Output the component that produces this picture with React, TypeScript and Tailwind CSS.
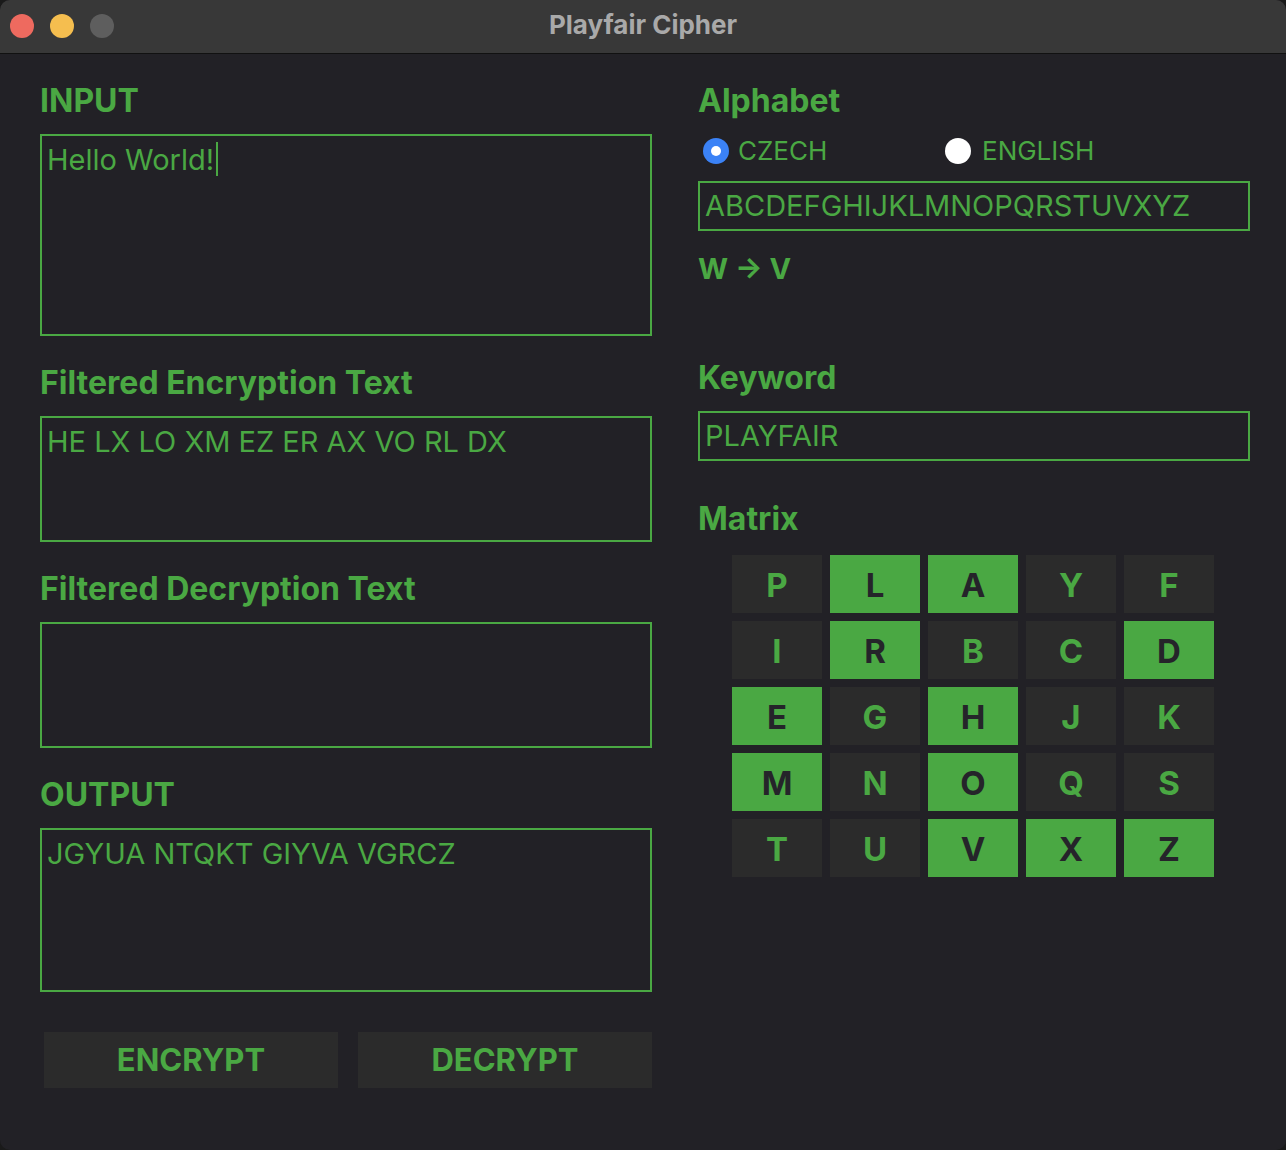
import React from "react";

const Label = ({ children }: { children: React.ReactNode }) => (
  <div className="text-[32px] leading-[36px] font-bold text-[#4aa843]">{children}</div>
);

const Box = ({ h, children, caret }: { h: string; children?: React.ReactNode; caret?: boolean }) => (
  <div className={`border-2 border-[#4aa843] ${h} px-[5px] pt-[6px] text-[29px] leading-[36px] text-[#4aa843]`}>
    {children}
    {caret && <span className="inline-block w-[2px] h-[34px] bg-[#4aa843] align-top ml-[2px]" />}
  </div>
);

const matrix = [
  ["P", "L", "A", "Y", "F"],
  ["I", "R", "B", "C", "D"],
  ["E", "G", "H", "J", "K"],
  ["M", "N", "O", "Q", "S"],
  ["T", "U", "V", "X", "Z"],
];
const greens = new Set(["L", "A", "R", "D", "E", "H", "M", "O", "V", "X", "Z"]);

export default function App() {
  return (
    <div className="w-[1286px] h-[1150px] bg-[#1a1a1a]" style={{ fontFamily: "Inter, 'Noto Sans', sans-serif" }}>
      <div className="w-full h-full rounded-[10px] overflow-hidden bg-[#222126] flex flex-col">
        <div className="h-[54px] bg-[#383838] border-b border-[#111] flex items-center relative shrink-0">
          <div className="flex gap-[16px] pl-[10px] -mt-[2px]">
            <div className="w-[24px] h-[24px] rounded-full bg-[#ee6a5f]" />
            <div className="w-[24px] h-[24px] rounded-full bg-[#f5be4f]" />
            <div className="w-[24px] h-[24px] rounded-full bg-[#5e5e5e]" />
          </div>
          <div className="absolute inset-0 flex items-center justify-center pb-[4px] text-[26px] font-bold text-[#a9a9a9] pointer-events-none">
            Playfair Cipher
          </div>
        </div>
        <div className="flex pl-[40px] pt-[29px] gap-[46px]">
          <div className="w-[612px] flex flex-col">
            <Label>INPUT</Label>
            <div className="mt-[15px]">
              <Box h="h-[202px]" caret>Hello World!</Box>
            </div>
            <div className="mt-[29px]"><Label>Filtered Encryption Text</Label></div>
            <div className="mt-[15px]">
              <Box h="h-[126px]">HE LX LO XM EZ ER AX VO RL DX</Box>
            </div>
            <div className="mt-[29px]"><Label>Filtered Decryption Text</Label></div>
            <div className="mt-[15px]">
              <Box h="h-[126px]" />
            </div>
            <div className="mt-[29px]"><Label>OUTPUT</Label></div>
            <div className="mt-[15px]">
              <Box h="h-[164px]">JGYUA NTQKT GIYVA VGRCZ</Box>
            </div>
            <div className="mt-[40px] flex gap-[20px] pl-[4px]">
              <button className="w-[294px] h-[56px] bg-[#2b2b2b] text-[31px] font-bold text-[#4aa843]">ENCRYPT</button>
              <button className="w-[294px] h-[56px] bg-[#2b2b2b] text-[31px] font-bold text-[#4aa843]">DECRYPT</button>
            </div>
          </div>
          <div className="w-[552px] flex flex-col">
            <Label>Alphabet</Label>
            <div className="mt-[18px] flex items-center h-[28px] pl-[5px]">
              <div className="flex items-center gap-[9px] w-[242px]">
                <div className="w-[26px] h-[26px] rounded-full bg-[#3b82f6] flex items-center justify-center">
                  <div className="w-[10px] h-[10px] rounded-full bg-white" />
                </div>
                <span className="text-[26px] text-[#4aa843] leading-none">CZECH</span>
              </div>
              <div className="flex items-center gap-[11px]">
                <div className="w-[26px] h-[26px] rounded-full bg-white" />
                <span className="text-[26px] text-[#4aa843] leading-none">ENGLISH</span>
              </div>
            </div>
            <div className="mt-[16px] border-2 border-[#4aa843] h-[50px] px-[5px] flex items-center text-[29px] text-[#4aa843]">
              ABCDEFGHIJKLMNOPQRSTUVXYZ
            </div>
            <div className="mt-[20px] text-[29px] leading-[36px] font-bold text-[#4aa843]">W → V</div>
            <div className="mt-[73px]"><Label>Keyword</Label></div>
            <div className="mt-[15px] border-2 border-[#4aa843] h-[50px] px-[5px] flex items-center text-[29px] text-[#4aa843]">
              PLAYFAIR
            </div>
            <div className="mt-[40px]"><Label>Matrix</Label></div>
            <div className="mt-[18px] ml-[34px] grid grid-cols-[repeat(5,90px)] grid-rows-[repeat(5,58px)] gap-[8px]">
              {matrix.flat().map((c) => (
                <div
                  key={c}
                  className={`flex items-center justify-center pt-[4px] text-[33px] font-bold ${greens.has(c) ? "bg-[#4aa843] text-[#25242a]" : "bg-[#2b2b2b] text-[#4aa843]"}`}
                >
                  {c}
                </div>
              ))}
            </div>
          </div>
        </div>
      </div>
    </div>
  );
}
